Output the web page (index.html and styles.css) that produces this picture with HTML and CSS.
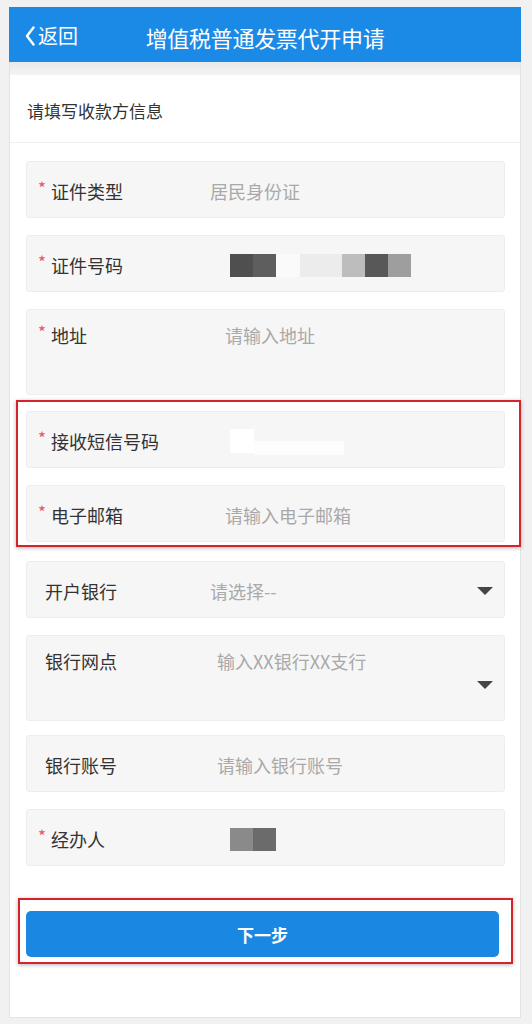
FILE: index.html
```html
<!DOCTYPE html>
<html lang="zh-CN">
<head>
<meta charset="utf-8">
<title>增值税普通发票代开申请</title>
<link rel="stylesheet" href="styles.css">
</head>
<body>
<div class="page">
  <header class="topbar">
    <a class="back">
      <svg class="chev" viewBox="0 0 10 20" width="10" height="20"><path d="M8.5 1.5 L2 10 L8.5 18.5" fill="none" stroke="#fff" stroke-width="2.4" stroke-linecap="round" stroke-linejoin="round"/></svg>
      <span>返回</span>
    </a>
    <h1 class="title">增值税普通发票代开申请</h1>
    <span></span>
  </header>
  <div class="sheet">
    <div class="band"></div>
    <div class="section-title">请填写收款方信息</div>
    <div class="form">
      <div class="field">
        <div class="label"><i class="star">*</i>证件类型</div>
        <div class="value select-val">居民身份证</div>
      </div>
      <div class="field">
        <div class="label"><i class="star">*</i>证件号码</div>
        <div class="value masked">
          <span class="px p1"></span><span class="px p2"></span><span class="px gapx"></span><span class="px p3"></span><span class="px p4"></span><span class="px p5"></span><span class="px p6"></span>
        </div>
      </div>
      <div class="field multi">
        <div class="label"><i class="star">*</i>地址</div>
        <div class="value input-val">请输入地址</div>
      </div>
      <div class="mark mark-fields">
        <div class="field">
          <div class="label"><i class="star">*</i>接收短信号码</div>
          <div class="value masked">
            <span class="wb wb1"></span><span class="wb wb2"></span>
          </div>
        </div>
        <div class="field">
          <div class="label"><i class="star">*</i>电子邮箱</div>
          <div class="value input-val">请输入电子邮箱</div>
        </div>
      </div>
      <div class="field">
        <div class="label plain">开户银行</div>
        <div class="value select-val">请选择--</div>
        <span class="caret"></span>
      </div>
      <div class="field multi">
        <div class="label plain">银行网点</div>
        <div class="value bank-val">输入XX银行XX支行</div>
        <span class="caret"></span>
      </div>
      <div class="field">
        <div class="label plain">银行账号</div>
        <div class="value bank-val">请输入银行账号</div>
      </div>
      <div class="field">
        <div class="label"><i class="star">*</i>经办人</div>
        <div class="value masked">
          <span class="px q1"></span><span class="px q2"></span>
        </div>
      </div>
      <div class="mark mark-btn">
        <button class="next">下一步</button>
      </div>
    </div>
  </div>
</div>
</body>
</html>
```
FILE: styles.css
```css
html, body {
  margin: 0;
  padding: 0;
}
body {
  background: #f1f1f1;
  font-family: "Noto Sans CJK SC", "Noto Sans", "Liberation Sans", sans-serif;
  color: #333;
}
.page {
  width: 512px;
  height: 1011px;
  margin: 7px 0 0 9px;
  display: flex;
  flex-direction: column;
  background: #fff;
}
.topbar {
  height: 55px;
  flex: 0 0 55px;
  background: #1b8ae6;
  display: grid;
  grid-template-columns: 1fr auto 1fr;
  align-items: center;
  color: #fff;
}
.back {
  display: flex;
  align-items: center;
  padding-left: 16px;
  padding-top: 3px;
  font-size: 20px;
  line-height: 24px;
  color: #fff;
}
.chev {
  display: block;
  margin-right: 3px;
}
.title {
  margin: 0;
  padding-top: 4px;
  font-size: 22px;
  font-weight: 400;
  line-height: 26px;
  letter-spacing: -0.3px;
  text-align: center;
}
.sheet {
  flex: 1;
  border-left: 1px solid #e3e3e3;
  border-right: 1px solid #e3e3e3;
  border-bottom: 1px solid #e3e3e3;
  display: flex;
  flex-direction: column;
}
.band {
  height: 13px;
  background: linear-gradient(#e9e9e9, #f4f4f4);
}
.section-title {
  height: 68px;
  box-sizing: border-box;
  display: flex;
  align-items: center;
  padding: 4px 0 0 17px;
  font-size: 17px;
  border-bottom: 1px solid #efefef;
}
.form {
  padding: 18px 15px 0 16px;
}
.field {
  height: 57px;
  box-sizing: border-box;
  background: #f6f6f6;
  border: 1px solid #ededed;
  border-radius: 3px;
  display: flex;
  align-items: center;
  padding: 3px 0 0 12px;
  margin-bottom: 17px;
  font-size: 18px;
  line-height: 24px;
}
.field.multi {
  height: 86px;
  align-items: flex-start;
  padding-top: 13px;
  margin-bottom: 14px;
}
.label {
  flex: 0 0 171px;
  display: flex;
  align-items: flex-start;
  color: #333;
  white-space: nowrap;
}
.label.plain {
  padding-left: 6px;
  flex-basis: 165px;
}
.star {
  font-style: normal;
  color: #e5566a;
  font-size: 17px;
  line-height: 17px;
  width: 13px;
  flex: 0 0 13px;
  margin-left: -1px;
}
.value {
  color: #a9a9a9;
  white-space: nowrap;
}
.select-val {
  padding-left: 0;
}
.input-val {
  padding-left: 15px;
}
.bank-val {
  padding-left: 7px;
}
.masked {
  padding-left: 20px;
  display: flex;
  align-items: center;
  height: 24px;
}
.px {
  display: block;
  width: 23px;
  height: 23px;
}
.p1 { background: #4f4f4f; }
.p2 { background: #5e5e5e; }
.gapx { width: 24px; background: #fafafa; }
.p3 { width: 42px; background: #ececec; }
.p4 { background: #bdbdbd; }
.p5 { background: #585858; }
.p6 { background: #9e9e9e; }
.q1 { background: #8a8a8a; }
.q2 { background: #6b6b6b; }
.wb {
  display: block;
  background: #ffffff;
}
.wb1 { width: 24px; height: 24px; }
.wb2 { width: 90px; height: 14px; margin-top: 14px; background: #fdfdfd; }
.caret {
  margin-left: auto;
  margin-right: 11px;
  align-self: center;
  width: 0;
  height: 0;
  border-left: 8px solid transparent;
  border-right: 8px solid transparent;
  border-top: 8px solid #454545;
}
.mark {
  border: 2px solid #d3232b;
  box-shadow: 0 1px 4px rgba(0, 0, 0, 0.3);
}
.mark-fields {
  margin: -9px -16px 14px -10px;
  padding: 9px 14px 3px 8px;
}
.mark-fields .field:last-child {
  margin-bottom: 0;
}
.mark-btn {
  margin: 32px -8px 0 -8px;
  padding: 11px 12px 5px 6px;
}
.next {
  display: block;
  width: 100%;
  height: 46px;
  border: none;
  border-radius: 5px;
  background: #1a88e3;
  color: #fff;
  font-family: "Noto Sans CJK SC", "Noto Sans", sans-serif;
  font-size: 17px;
  font-weight: 700;
  padding: 0;
}
```
